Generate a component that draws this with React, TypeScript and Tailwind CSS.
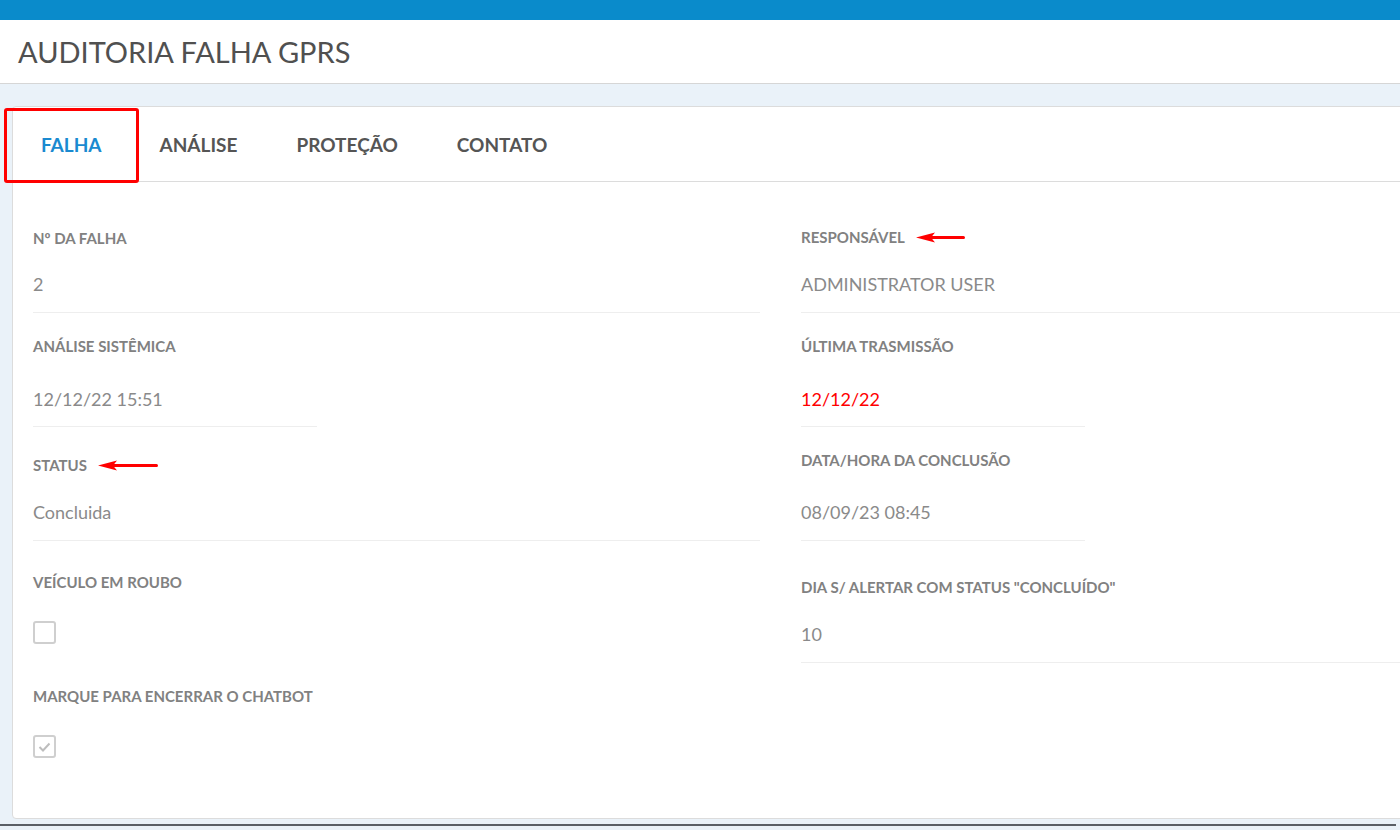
import React from "react";

const font = { fontFamily: "Lato, 'Open Sans', sans-serif" };

function Arrow({ len }: { len: number }) {
  return (
    <svg width={len} height="11" viewBox={`0 0 ${len} 11`} className="ml-[11px] inline-block">
      <path d="M0 5.5 L19 0.5 L15 5.5 L19 10.5 Z" fill="#f00" />
      <rect x="13" y="4" width={len - 13} height="3" rx="1.5" fill="#f00" />
    </svg>
  );
}

function Label({ text, arrow }: { text: string; arrow?: number }) {
  return (
    <div className="flex h-5 items-center text-[15px] font-bold uppercase leading-5 text-[#818181]">
      {text}
      {arrow && <Arrow len={arrow} />}
    </div>
  );
}

function Checkbox({ checked }: { checked?: boolean }) {
  return (
    <div className="flex h-[23px] w-[23px] items-center justify-center rounded-[3px] border-2 border-[#cfcfcf] bg-white">
      {checked && (
        <svg width="13" height="10" viewBox="0 0 13 10">
          <path d="M1.5 5 L5 8.5 L11.5 1.5" fill="none" stroke="#bdbdbd" strokeWidth="2" />
        </svg>
      )}
    </div>
  );
}

export default function App() {
  return (
    <div className="relative h-[830px] w-[1400px] overflow-hidden bg-[#eaf2f9]" style={font}>
      {/* top strip */}
      <div className="h-5 bg-[#0a8bcb]" />

      {/* page header */}
      <div className="flex h-[64px] items-center border-b border-[#d6d6d6] bg-white pl-[18px]">
        <h1 className="text-[29px] font-normal leading-none text-[#505050]">AUDITORIA FALHA GPRS</h1>
      </div>

      {/* card */}
      <div className="ml-3 mt-[22px] w-[1560px] rounded-[4px] border border-[#dcdcdc] bg-white">
        <div className="relative flex h-[75px] items-center border-b border-[#dcdcdc] pl-[28px] pt-[3px] text-[19px] font-bold text-[#555]">
          <div className="pointer-events-none absolute left-[-9px] top-[1px] h-[75px] w-[135px] rounded-[3px] border-[3px] border-[#f00]" />
          <span className="text-[#1a8ad0]">FALHA</span>
          <span className="ml-[58px]">ANÁLISE</span>
          <span className="ml-[59px]">PROTEÇÃO</span>
          <span className="ml-[59px]">CONTATO</span>
        </div>

        <div className="flex gap-[41px] pl-[20px]">
          {/* left column */}
          <div className="flex w-[727px] flex-col">
            <div className="border-b border-[#eeeeee] pb-4 pt-[46px]">
              <Label text="Nº da falha" />
              <div className="mt-6 text-[18px] leading-6 text-[#8a8a8a]">2</div>
            </div>
            <div className="w-[284px] border-b border-[#eeeeee] pb-[15px] pt-[23px]">
              <Label text="Análise sistêmica" />
              <div className="mt-[31px] text-[18px] leading-6 text-[#8a8a8a]">12/12/22 15:51</div>
            </div>
            <div className="border-b border-[#eeeeee] pb-4 pt-[28px]">
              <Label text="Status" arrow={60} />
              <div className="mt-[25px] text-[18px] leading-6 text-[#8a8a8a]">Concluida</div>
            </div>
            <div className="pt-[31px]">
              <Label text="Veículo em roubo" />
              <div className="mt-[29px]">
                <Checkbox />
              </div>
            </div>
            <div className="pb-[60px] pt-[42px]">
              <Label text="Marque para encerrar o chatbot" />
              <div className="mt-[29px]">
                <Checkbox checked />
              </div>
            </div>
          </div>

          {/* right column */}
          <div className="flex w-[727px] flex-col">
            <div className="border-b border-[#eeeeee] pb-4 pt-[45px]">
              <Label text="Responsável" arrow={49} />
              <div className="mt-[25px] text-[18px] leading-6 text-[#8a8a8a]">ADMINISTRATOR USER</div>
            </div>
            <div className="w-[284px] border-b border-[#eeeeee] pb-[15px] pt-[23px]">
              <Label text="Última trasmissão" />
              <div className="mt-[31px] text-[18px] leading-6 text-[#f00]">12/12/22</div>
            </div>
            <div className="w-[284px] border-b border-[#eeeeee] pb-4 pt-[23px]">
              <Label text="Data/hora da conclusão" />
              <div className="mt-[30px] text-[18px] leading-6 text-[#8a8a8a]">08/09/23 08:45</div>
            </div>
            <div className="border-b border-[#eeeeee] pb-4 pt-[36px]">
              <Label text='Dia s/ alertar com status "concluído"' />
              <div className="mt-[25px] text-[18px] leading-6 text-[#8a8a8a]">10</div>
            </div>
          </div>
        </div>
      </div>

      {/* bottom edge of the next panel */}
      <div className="mt-[5px] h-[2px] w-[1396px] bg-[#5a5f66]" />
    </div>
  );
}
